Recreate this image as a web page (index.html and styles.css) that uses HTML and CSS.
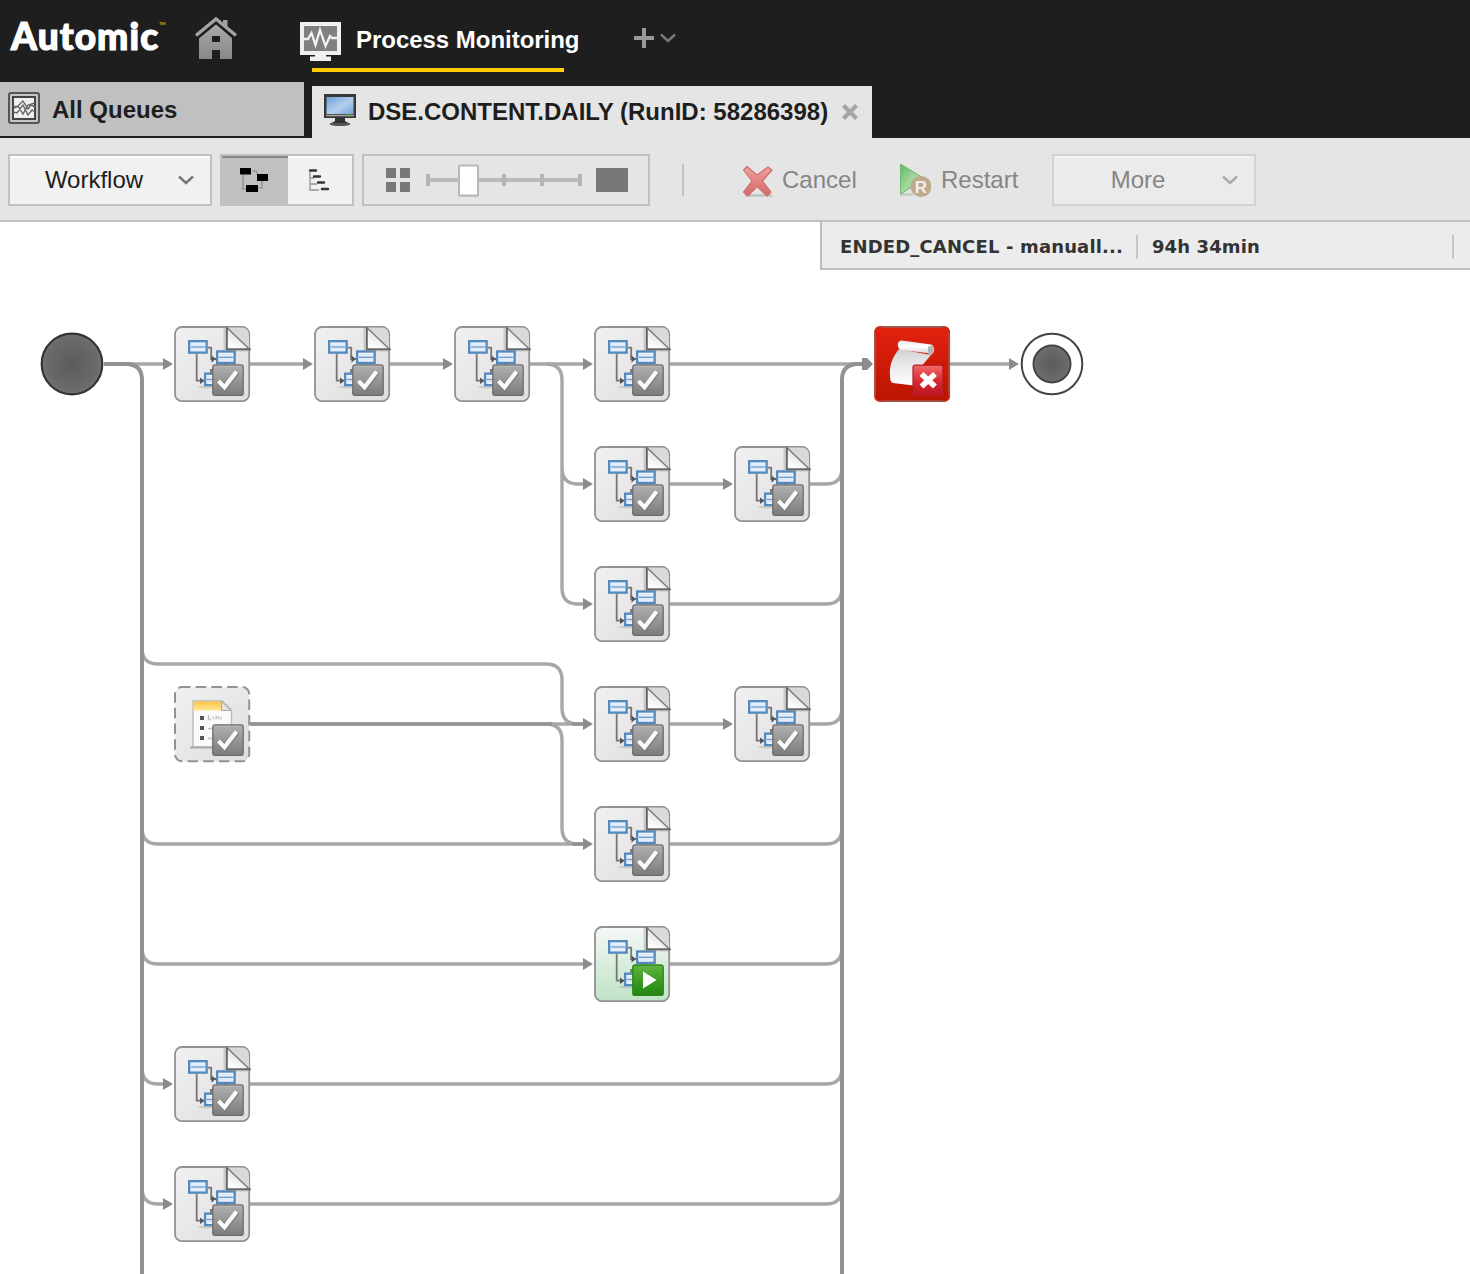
FILE: index.html
```html
<!DOCTYPE html>
<html lang="en">
<head>
<meta charset="utf-8">
<title>Process Monitoring</title>
<link rel="stylesheet" href="styles.css">
</head>
<body>
<svg class="defs" width="0" height="0" aria-hidden="true">
  <defs>
    <linearGradient id="card" x2="1" y2="1"><stop stop-color="#f1f1f1"/><stop offset="1" stop-color="#dedede"/></linearGradient>
    <linearGradient id="cardGreen" x2="0" y2="1"><stop stop-color="#f5f8f6"/><stop offset="1" stop-color="#bfe3c5"/></linearGradient>
    <linearGradient id="cardRed" x2="0" y2="1"><stop stop-color="#e3210f"/><stop offset="1" stop-color="#b81500"/></linearGradient>
    <linearGradient id="fold" x1=".4" y1="1" x2="1" y2="0"><stop stop-color="#fff"/><stop offset="1" stop-color="#ccc"/></linearGradient>
    <linearGradient id="tick" x2="0" y2="1"><stop stop-color="#b0b0b0"/><stop offset="1" stop-color="#7c7c7c"/></linearGradient>
    <linearGradient id="run" x2="0" y2="1"><stop stop-color="#64b443"/><stop offset=".5" stop-color="#3a9c22"/><stop offset="1" stop-color="#258414"/></linearGradient>
    <linearGradient id="fail" x2="0" y2="1"><stop stop-color="#f26a6c"/><stop offset=".5" stop-color="#d82c33"/><stop offset="1" stop-color="#bd1722"/></linearGradient>
    <linearGradient id="paper" x2="0" y2="1"><stop stop-color="#cfcfcf"/><stop offset=".35" stop-color="#e6e6e6"/><stop offset="1" stop-color="#fff"/></linearGradient>
    <linearGradient id="roll" x2="0" y2="1"><stop stop-color="#e2e2e2"/><stop offset=".4" stop-color="#fff"/><stop offset="1" stop-color="#cdcdcd"/></linearGradient>
    <linearGradient id="yellow" x2="0" y2="1"><stop stop-color="#fcc544"/><stop offset="1" stop-color="#ffe891"/></linearGradient>
    <linearGradient id="homeFill" x2="0" y2="1"><stop stop-color="#aaa"/><stop offset="1" stop-color="#888"/></linearGradient>
    <linearGradient id="screen" x2="1" y2="1"><stop stop-color="#6d9ed6"/><stop offset=".55" stop-color="#b4cfec"/><stop offset="1" stop-color="#76a5da"/></linearGradient>
    <linearGradient id="cross" x2="0" y2="1"><stop stop-color="#efa09c"/><stop offset="1" stop-color="#d5686a"/></linearGradient>
    <linearGradient id="play" x2="1" y2="1"><stop stop-color="#62b765"/><stop offset=".5" stop-color="#a6d89f"/><stop offset="1" stop-color="#69bd68"/></linearGradient>
    <radialGradient id="disc"><stop stop-color="#5c5c5c"/><stop offset=".85" stop-color="#6a6a6a"/><stop offset="1" stop-color="#747474"/></radialGradient>

    <g id="box">
      <rect x="1.2" y="1.2" width="17.4" height="11.4" fill="#fff" stroke="#5489c0" stroke-width="2.4"/>
      <rect x="3.2" y="3.2" width="13.4" height="7.4" fill="#dfeafa"/>
      <path d="M3 7H17" stroke="#6f9bd0" stroke-width="1.3"/>
    </g>
    <g id="doc">
      <ellipse cx="33" cy="61" rx="9" ry="1.5" fill="#999" opacity=".35"/>
      <path d="M22.7 28V54.7H31M34 21.7H37.2V33H42M51.5 38V44H37V47" fill="none" stroke="#777" stroke-width="1.8"/>
      <path d="M37.5 29.5 42 33 37.5 36.5ZM26 51.5 30.5 54.7 26 58Z" fill="#555"/>
      <use href="#box" x="14" y="14"/><use href="#box" x="42" y="24.3"/><use href="#box" x="30" y="46.5"/>
      <path d="M49.5 1V25.5H74V22H54V1Z" fill="#888" opacity=".3"/>
      <path d="M52.8 1.5H68Q75 2 75 10V23H52.8Z" fill="#d9d9d9"/>
      <path d="M52.8 1.5 75.5 23.3H52.8Z" fill="url(#fold)" stroke="#7a7a7a" stroke-width="1.4"/>
      <path d="M52.8 1.5V23.3H76.8" fill="none" stroke="#666" stroke-width="1.7"/>
    </g>
    <g id="badgeTick">
      <rect x="38.8" y="39" width="30.4" height="30.4" rx="2.5" fill="url(#tick)" stroke="#6c6c6c" stroke-width="1.3"/>
      <path d="M40 40.2H68" stroke="#bbb"/>
      <path d="M45 55.5 51 61.5 63 46" fill="none" stroke="#666" stroke-width="6" opacity=".4"/>
      <path d="M44.5 55 50.5 61.2 62.500 45.500" fill="none" stroke="#fafafa" stroke-width="4.2"/>
    </g>
    <symbol id="jobDone" viewBox="0 0 78 78">
      <rect x="1" y="1" width="74.2" height="74.2" rx="7" fill="url(#card)" stroke="#929292" stroke-width="1.8"/>
      <use href="#doc"/><use href="#badgeTick"/>
    </symbol>
    <symbol id="jobRunning" viewBox="0 0 78 78">
      <rect x="1" y="1" width="74.2" height="74.2" rx="7" fill="url(#cardGreen)" stroke="#929292" stroke-width="1.8"/>
      <use href="#doc"/>
      <rect x="38.8" y="39" width="30.4" height="30.4" rx="2.5" fill="url(#run)" stroke="#2b8719" stroke-width="1.4"/>
      <path d="M49 45.5V62.5L62.5 54Z" fill="#fff"/>
    </symbol>
    <symbol id="schedule" viewBox="0 0 78 78">
      <rect x="1" y="1" width="74.2" height="74.2" rx="7" fill="url(#card)" stroke="#929292" stroke-width="2" stroke-dasharray="10.5 5.2" stroke-dashoffset="2"/>
      <path d="M19 15H48L57.5 24V61H19Z" fill="#fafafa" stroke="#bbb" stroke-width="1.4"/>
      <path d="M19.5 15.5H47L52 24.5H19.5Z" fill="url(#yellow)"/>
      <path d="M47.5 15.5V24.5H57Z" fill="#e3e3e3" stroke="#aaa"/>
      <path d="M16 61.5H45" stroke="#aaa" stroke-width="2"/>
      <path d="M26 30h4v4h-4zM26 40h4v4h-4zM26 50h4v4h-4z" fill="#555"/>
      <path d="M34.500 29V33.500H37M39 30.500V33.500M42 33.500V31H44.500V33.500M47 31V33.500M34 42.500H38M34 52.500H38" stroke="#c2c2c2" stroke-width="1.3" fill="none"/>
      <use href="#badgeTick"/>
    </symbol>
    <symbol id="scriptFailed" viewBox="0 0 78 78">
      <rect x="1" y="1" width="74.2" height="74.2" rx="5" fill="url(#cardRed)" stroke="#c92a1d" stroke-width="1.8"/>
      <path d="M7 1H69M7 75.2H69M1 7V69M75.2 7V69" stroke="#95615a" stroke-width="1.3"/>
      <path d="M25 23C18 32 15 40 16 50Q16 56 19 57L44 60 46 42 57 29Z" fill="url(#paper)"/>
      <path d="M28 14.500 57 18.500Q61 20 60 26L57 29 53 27 27 24Q23 22 24 17 25 14 28 14.500Z" fill="url(#roll)"/>
      <path d="M54 21Q60 17 60 25L56 30 54 27Z" fill="#b5b5b5"/>
      <rect x="39" y="39.2" width="30" height="30" rx="2.5" fill="url(#fail)" stroke="#b51b25" stroke-width="1.2"/>
      <path d="M47.500 48 61 60.500M61 48 47.500 60.500" stroke="#fff" stroke-width="5.6"/>
    </symbol>
  </defs>
</svg>

<header class="topbar">
  <div class="logo">Automic<span class="tm">™</span></div>
  <svg class="home" width="44" height="46" viewBox="0 0 44 46">
    <path d="M5 22 22 8 38 22V43H26V34H18V43H5Z" fill="url(#homeFill)"/>
    <path d="M18 20H26V26H18Z" fill="#1e1e1e"/>
    <path d="M2 21 22 4.5 42 21" fill="none" stroke="#1e1e1e" stroke-width="6"/>
    <path d="M2 19.5 22 3 42 19.5" fill="none" stroke="#a3a3a3" stroke-width="3.4"/>
    <path d="M29 4H33.5V13L29 9Z" fill="#a0a0a0"/>
  </svg>
  <div class="perspective">
    <svg width="44" height="42" viewBox="0 0 44 42">
      <path d="M1 1H42V34H27V35.500H32V40H11V35.500H16V34H1Z" fill="#f0f0f0"/>
      <rect x="5" y="5" width="33" height="25" fill="#808080"/>
      <path d="M4 18H9L12.500 12 16.500 24 21 9 26.500 25 31 15 33 17H39" fill="none" stroke="#f2f2f2" stroke-width="2.300"/>
    </svg>
    <span>Process Monitoring</span>
  </div>
  <svg class="add" width="44" height="22" viewBox="0 0 44 22"><path d="M0 11H20M10 1V21" stroke="#999" stroke-width="4"/><path d="M27 7.500 34 14 41 7.500" fill="none" stroke="#777" stroke-width="2.4"/></svg>
</header>

<nav class="tabs">
  <div class="tab queues">
    <svg width="32" height="32" viewBox="0 0 32 32"><rect x="1" y="1" width="30" height="30" rx="2" fill="#c6c6c6" stroke="#555" stroke-width="2"/><rect x="5" y="5" width="22" height="22" fill="#efefef" stroke="#444" stroke-width="2"/><path d="M5 14 9 15 15 9 20 17 23 13 27 15M5 20 9 21 15 13 20 23 24 18 27 20M6 16 10 14 15 22 20 13 27 11" fill="none" stroke="#666" stroke-width="1.4"/></svg>
    <span>All Queues</span>
  </div>
  <div class="tab active">
    <svg width="32" height="32" viewBox="0 0 32 32"><ellipse cx="16" cy="30" rx="10.5" ry="2" fill="#555"/><path d="M11 23H21V27L24 29H8L11 27Z" fill="#333"/><path d="M0 0H32V24H0Z" fill="#383838"/><rect x="2.5" y="3" width="27" height="17" fill="url(#screen)"/><path d="M2 21.5H30" stroke="#aaa" stroke-width="1.5"/><circle cx="25" cy="21" r="1.5" fill="#43b52c"/></svg>
    <span>DSE.CONTENT.DAILY (RunID: 58286398)</span>
    <svg class="close" width="16" height="16" viewBox="0 0 16 16"><path d="M1.5 1.5 14.5 14.5M14.5 1.5 1.5 14.5" stroke="#a5a5a5" stroke-width="4.2"/></svg>
  </div>
</nav>

<div class="toolbar">
  <div class="select">
    <span>Workflow</span>
    <svg width="16" height="10" viewBox="0 0 16 10"><path d="M1 1.5 8 8 15 1.5" fill="none" stroke="#777" stroke-width="2.4"/></svg>
  </div>
  <div class="views">
    <div class="view on"><svg width="30" height="26" viewBox="0 0 30 26"><path d="M3 8V22H8M12 4H16L18 8M22 13V21H19" fill="none" stroke="#999" stroke-width="1.7"/><path d="M0 1h11v6.500h-11zM17 7h11v7h-11zM6 18h12v7h-12z"/></svg></div>
    <div class="view"><svg width="24" height="24" viewBox="0 0 24 24"><path d="M2 4V22H11M2 10H6M2 16H9" fill="none" stroke="#aaa" stroke-width="1.8"/><path d="M2 2.5H8M6 8.500H12M10 14.500H16M14 21H20" stroke="#333" stroke-width="2.4" stroke-linecap="round"/></svg></div>
  </div>
  <div class="zoom">
    <svg width="284" height="48" viewBox="0 0 284 48">
      <path d="M22 12h10v10h-10zM36 12h10v10h-10zM22 26h10v10h-10zM36 26h10v10h-10zM232 12h32v24h-32z" fill="#787878"/>
      <path d="M64 24H216" stroke="#bababa" stroke-width="4"/>
      <path d="M64 18V30M140 18V30M178 18V30M216 18V30" stroke="#b5b5b5" stroke-width="4"/>
      <rect x="94" y="9" width="21" height="32" rx="2" fill="#ccc"/>
      <rect x="95" y="9.5" width="19" height="30" rx="1" fill="#fff" stroke="#b8b8b8" stroke-width="2"/>
    </svg>
  </div>
  <div class="rule"></div>
  <div class="action cancel">
    <svg width="32" height="32" viewBox="0 0 32 32"><path d="M3 30.5H30" stroke="#bbb" stroke-width="2"/><path d="M5 1.500 15 10 26 2 30 5 20.500 16 29 27 25 31 15 21.500 6 31 1.500 27 10 16 1.500 5Z" fill="url(#cross)" stroke="#cc7071" stroke-width="1.2" stroke-linejoin="round"/></svg>
    <span>Cancel</span>
  </div>
  <div class="action restart">
    <svg width="32" height="36" viewBox="0 0 32 36"><path d="M1 30H14V33H1Z" fill="#ccc"/><path d="M1.500 1 26 16 1.500 31Z" fill="url(#play)" stroke="#6dba70"/><circle cx="22" cy="23.500" r="10.500" fill="#bfa98d"/><text x="22" y="29.500" text-anchor="middle" class="mark">R</text></svg>
    <span>Restart</span>
  </div>
  <div class="select muted">
    <span>More</span>
    <svg width="16" height="10" viewBox="0 0 16 10"><path d="M1 1.5 8 8 15 1.5" fill="none" stroke="#aaa" stroke-width="2.4"/></svg>
  </div>
</div>

<main class="canvas">
  <div class="status">
    <span class="state">ENDED_CANCEL - manuall...</span>
    <span class="time">94h 34min</span>
  </div>
  <svg class="links" width="1470" height="1052" viewBox="0 222 1470 1052">
    <g fill="none" stroke="#a7a7a7" stroke-width="3.4">
      <path d="M104 364H170M250 364H310M390 364H450M530 364H590M670 364H866M950 364H1014M670 484H730M670 724H730"/>
      <path d="M546 364Q562 364 562 380V468Q562 484 578 484H590M562 468V588Q562 604 578 604H590"/>
      <path d="M142 648Q142 664 158 664H546Q562 664 562 680V708Q562 724 578 724H590M250 724H590M546 724Q562 724 562 740V828Q562 844 578 844H590"/>
      <path d="M142 828Q142 844 158 844H590M142 948Q142 964 158 964H590M142 1068Q142 1084 158 1084H170M142 1188Q142 1204 158 1204H170"/>
      <path d="M810 484H826Q842 484 842 468M670 604H826Q842 604 842 588M810 724H826Q842 724 842 708M670 844H826Q842 844 842 828M670 964H826Q842 964 842 948M250 1084H826Q842 1084 842 1068M250 1204H826Q842 1204 842 1188"/>
    </g>
    <g fill="none" stroke="#929292" stroke-width="4">
      <path d="M104 364H126Q142 364 142 380V1274M842 1274V380Q842 364 858 364H864"/>
      <path d="M250 724H552M572 724H590M572 844H590" stroke-width="3.4"/>
    </g>
    <g fill="#8c8c8c">
      <path d="M163 358 173 364 163 370ZM303 358 313 364 303 370ZM443 358 453 364 443 370ZM583 358 593 364 583 370ZM862 358H867L873 364 867 370H862ZM1009 358 1019 364 1009 370Z"/>
      <path d="M583 478 593 484 583 490ZM723 478 733 484 723 490ZM583 598 593 604 583 610ZM583 718 593 724 583 730ZM723 718 733 724 723 730ZM583 838 593 844 583 850ZM583 958 593 964 583 970ZM163 1078 173 1084 163 1090ZM163 1198 173 1204 163 1210Z"/>
    </g>
    <circle cx="72" cy="364" r="30.3" fill="url(#disc)" stroke="#343434" stroke-width="2.2"/>
    <circle cx="1052" cy="364" r="30.3" fill="#fff" stroke="#444" stroke-width="2"/>
    <circle cx="1052" cy="364" r="18.5" fill="url(#disc)" stroke="#444" stroke-width="2"/>
    <g>
      <use href="#jobDone" x="174" y="326" width="78" height="78"/>
      <use href="#jobDone" x="314" y="326" width="78" height="78"/>
      <use href="#jobDone" x="454" y="326" width="78" height="78"/>
      <use href="#jobDone" x="594" y="326" width="78" height="78"/>
      <use href="#scriptFailed" x="874" y="326" width="78" height="78"/>
      <use href="#jobDone" x="594" y="446" width="78" height="78"/>
      <use href="#jobDone" x="734" y="446" width="78" height="78"/>
      <use href="#jobDone" x="594" y="566" width="78" height="78"/>
      <use href="#schedule" x="174" y="686" width="78" height="78"/>
      <use href="#jobDone" x="594" y="686" width="78" height="78"/>
      <use href="#jobDone" x="734" y="686" width="78" height="78"/>
      <use href="#jobDone" x="594" y="806" width="78" height="78"/>
      <use href="#jobRunning" x="594" y="926" width="78" height="78"/>
      <use href="#jobDone" x="174" y="1046" width="78" height="78"/>
      <use href="#jobDone" x="174" y="1166" width="78" height="78"/>
    </g>
  </svg>
</main>
</body>
</html>
```
FILE: styles.css
```css
* { box-sizing: border-box; }
body {
  margin: 0;
  height: 1274px;
  overflow: hidden;
  background: #fff;
  color: #1e1e1e;
  font: 24px/28px "Liberation Sans", Arial, sans-serif;
}
svg { display: block; flex: none; }
span { white-space: nowrap; }
.defs { position: absolute; }

.topbar {
  display: flex;
  align-items: flex-start;
  height: 82px;
  background: #1e1e1e;
  color: #fff;
}
.logo {
  display: flex;
  width: 194px;
  padding: 14px 0 0 11px;
  font: 900 37px/44px Lato, sans-serif;
  letter-spacing: 1.1px;
  -webkit-text-stroke: 1.2px #fff;
}
.tm {
  color: #b99b13;
  font-size: 9px;
  line-height: 24px;
  letter-spacing: 0;
  -webkit-text-stroke: 0;
}
.home { margin-top: 16px; }
.perspective {
  display: flex;
  gap: 13px;
  width: 280px;
  height: 72px;
  margin-left: 61px;
  padding-top: 21px;
  font-weight: bold;
  background: linear-gradient(#fc0, #fc0) 13px 100% / 252px 4px no-repeat;
}
.perspective span { padding-top: 5px; letter-spacing: -0.03px; }
.add { margin: 27px 0 0 55px; }

.tabs {
  display: flex;
  align-items: flex-end;
  gap: 8px;
  height: 56px;
  background: #1e1e1e;
  font-weight: bold;
}
.tab { display: flex; }
.queues {
  width: 304px;
  height: 54px;
  margin-bottom: 2px;
  padding: 10px 8px;
  gap: 12px;
  background: #c0c0c0;
}
.queues span { padding-top: 4px; }
.active {
  width: 560px;
  height: 52px;
  padding: 8px 12px;
  gap: 12px;
  background: #e5e5e5;
}
.active span { padding-top: 4px; width: 461px; }
.close { margin-top: 10px; margin-left: 1px; }

.toolbar {
  display: flex;
  align-items: flex-start;
  height: 84px;
  padding: 16px 8px;
  background: #e5e5e5;
  border-bottom: 2px solid #c0c0c0;
}
.select {
  display: flex;
  align-items: center;
  width: 204px;
  height: 52px;
  padding-right: 16px;
  background: #f1f1f1;
  border: 2px solid #c0c0c0;
  box-shadow: inset 0 2px #fff;
}
.select span { flex: 1; text-align: center; }
.views {
  display: flex;
  width: 134px;
  height: 52px;
  margin-left: 8px;
  border: 2px solid #c0c0c0;
  background: #f1f1f1;
}
.view { display: flex; flex: 1; align-items: center; justify-content: center; box-shadow: inset 0 2px #fff; }
.view.on { flex: 0 0 66px; background: #c0c0c0; box-shadow: inset 0 2px #888; }
.zoom { width: 288px; height: 52px; margin-left: 8px; border: 2px solid #c0c0c0; }
.rule { width: 2px; height: 32px; margin: 10px 58px 0 32px; background: #c0c0c0; }
.action { display: flex; color: #858585; }
.action span { padding-top: 12px; }
.cancel { width: 157px; gap: 8px; }
.cancel svg { margin-top: 11px; }
.restart { width: 153px; gap: 10px; }
.restart svg { margin-top: 9px; }
.mark { font: bold 17px "Liberation Sans", sans-serif; fill: #eee; }
.muted { background: #ebebeb; border-color: #d2d2d2; box-shadow: inset 0 2px #f2f2f2; color: #858585; }

.canvas { position: relative; height: 1052px; }
.status {
  position: absolute;
  top: 0;
  right: 0;
  display: flex;
  width: 650px;
  height: 48px;
  padding: 13px 16px 0 18px;
  background: #ececec;
  border: solid #bfbfbf;
  border-width: 0 0 2px 2px;
  font: bold 18px/24px "DejaVu Sans", sans-serif;
  color: #333;
}
.status span { height: 24px; border-right: 2px solid #c6c6c6; }
.state { width: 298px; letter-spacing: 0.15px; }
.time { width: 316px; padding-left: 14px; letter-spacing: 0.1px; }
```
